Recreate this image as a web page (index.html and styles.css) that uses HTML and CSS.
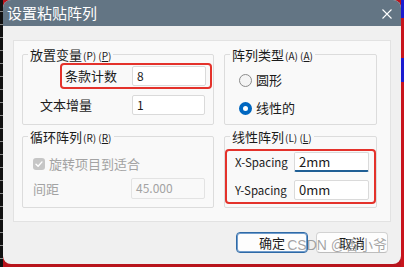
FILE: index.html
```html
<!DOCTYPE html>
<html lang="zh">
<head>
<meta charset="UTF-8">
<title>设置粘贴阵列</title>
<link rel="stylesheet" href="styles.css">
</head>
<body>
<div class="edge-left"></div>

<div class="dialog">
  <div class="titlebar">
    <span class="title">设置粘贴阵列</span>
    <svg class="close" width="10" height="10" viewBox="0 0 10 10">
      <path d="M0.5 0.5 L9.5 9.5 M9.5 0.5 L0.5 9.5" stroke="#fff" stroke-width="1.1" fill="none"/>
    </svg>
  </div>

  <div class="content">
    <div class="panel">

      <div class="group g-place">
        <div class="group-title">放置变量<small>(P) (<u>P</u>)</small></div>
        <div class="row mark row-count">
          <span class="label">条款计数</span>
          <span class="input">8</span>
        </div>
        <div class="row row-step">
          <span class="label">文本增量</span>
          <span class="input">1</span>
        </div>
      </div>

      <div class="group g-type">
        <div class="group-title">阵列类型<small>(A) (<u>A</u>)</small></div>
        <div class="row radio-row first">
          <span class="radio"></span>
          <span class="label">圆形</span>
        </div>
        <div class="row radio-row">
          <span class="radio checked"></span>
          <span class="label">线性的</span>
        </div>
      </div>

      <div class="group g-circ">
        <div class="group-title">循环阵列<small>(R) (<u>R</u>)</small></div>
        <div class="row check-row">
          <span class="checkbox">
            <svg width="12" height="12" viewBox="0 0 12 12"><path d="M3 6.2 L5.1 8.2 L9 3.9" stroke="#fff" stroke-width="1.4" fill="none" stroke-linecap="round" stroke-linejoin="round"/></svg>
          </span>
          <span class="label off">旋转项目到适合</span>
        </div>
        <div class="row row-gap">
          <span class="label off">间距</span>
          <span class="input off">45.000</span>
        </div>
      </div>

      <div class="group g-linear">
        <div class="group-title">线性阵列<small>(L) (<u>L</u>)</small></div>
        <div class="mark spacing">
          <div class="row">
            <span class="label latin">X-Spacing</span>
            <span class="input focus">2mm</span>
          </div>
          <div class="row">
            <span class="label latin">Y-Spacing</span>
            <span class="input">0mm</span>
          </div>
        </div>
      </div>

    </div>

    <div class="footer">
      <button class="btn primary">确定</button>
      <button class="btn">取消</button>
      <span class="watermark">CSDN @香小爷</span>
    </div>
  </div>
</div>

<div class="edge-right">
  <span class="blue b1"></span>
  <span class="red r1"></span>
  <span class="blue b2"></span>
  <span class="red r2"></span>
</div>
</body>
</html>
```

FILE: styles.css
```css
:root {
  --title: #637584;
  --body: #f0f0f0;
  --panel: #f9f9f9;
  --line: #dcdcdc;
  --text: #1b1b1b;
  --muted: #a3a3a3;
  --mark: #e4322b;
  --accent: #0067c0;
}

* { margin: 0; padding: 0; box-sizing: border-box; }

body {
  width: 404px;
  height: 267px;
  background: #b8141c;
  display: flex;
  align-items: flex-start;
  font-family: "Noto Sans CJK SC", "Noto Sans", sans-serif;
  color: var(--text);
  overflow: hidden;
}

/* screen edges around the window */
.edge-left {
  width: 3px;
  height: 267px;
  background: repeating-linear-gradient(180deg, #111 0 11px, #8a8a8a 11px 12px, #111 12px 13px);
}

.edge-right {
  width: 3px;
  height: 267px;
  display: flex;
  flex-direction: column;
}
.edge-right .blue { background: #1b1bd0; }
.edge-right .red { background: #c8141c; }
.b1 { height: 18px; }
.r1 { height: 40px; }
.b2 { height: 24px; }
.r2 { flex: 1; }

/* Window */
.dialog {
  width: 398px;
  height: 264px;
  background: var(--body);
  border-radius: 8px;
  overflow: hidden;
  display: flex;
  flex-direction: column;
}

.titlebar {
  height: 26px;
  background: var(--title);
  display: flex;
  align-items: center;
  justify-content: space-between;
  padding: 0 9px 0 4px;
}

.title {
  color: #fff;
  font-size: 15px;
  line-height: 20px;
}

.close { margin-top: 1px; }

.content {
  padding: 14px 10px 0;
}

.panel {
  background: var(--panel);
  border: 1px solid #e2e2e2;
  height: 182px;
  padding: 6px 13px 0 8px;
  display: grid;
  grid-template-columns: 192px 1fr;
  column-gap: 10px;
  row-gap: 4px;
  align-content: start;
}

/* Group boxes */
.group {
  margin-top: 7px;
  border: 1px solid var(--line);
  border-radius: 2px;
}
.g-place, .g-type { height: 71px; }
.g-circ, .g-linear { height: 72px; }

.group-title {
  margin: -8px 0 0 5px;
  padding: 0 2px;
  width: fit-content;
  background: var(--panel);
  font-size: 13px;
  line-height: 15px;
}
.group-title small {
  font-size: 10px;
  margin-left: 1px;
}

.row {
  display: flex;
  align-items: center;
  height: 20px;
}

.label {
  font-size: 13px;
  line-height: 18px;
  white-space: nowrap;
}
.label.off { color: var(--muted); }
.label.latin {
  font-size: 11.5px;
  flex: 1;
}

.input {
  width: 74px;
  height: 20px;
  background: #fff;
  border: 1px solid #dadada;
  border-radius: 2px;
  font-size: 12px;
  line-height: 18px;
  padding-left: 4px;
  margin-left: auto;
}
.input.off {
  background: var(--panel);
  border-color: #e3e3e3;
  color: var(--muted);
}
.input.focus {
  border-bottom: 2px solid #1f5f95;
}

/* red annotation boxes */
.mark {
  border: 2px solid var(--mark);
  border-radius: 4px;
}

.row-count {
  margin-left: 37px;
  width: 152px;
  height: 26px;
  padding: 0 4px 0 3px;
}

.row-step {
  margin-top: 6px;
  padding: 0 8px 0 17px;
}
.row-step .input { width: 73px; }

/* Radio buttons */
.radio-row {
  padding-left: 14px;
  gap: 4px;
  margin-top: 8px;
}
.radio-row.first { margin-top: 7px; }

.radio {
  width: 13px;
  height: 13px;
  border-radius: 50%;
  border: 1px solid #8b8b8b;
  background: #f4f4f4;
}
.radio.checked {
  border: 4px solid var(--accent);
  background: #fff;
}

/* Checkbox row */
.check-row {
  margin-top: 9px;
  padding-left: 10px;
  gap: 4px;
}
.checkbox {
  width: 12px;
  height: 12px;
  border-radius: 3px;
  background: #c6c6c6;
  display: flex;
}

.row-gap {
  margin-top: 4px;
  height: 21px;
  padding: 0 8px 0 10px;
}
.row-gap .input { height: 21px; }

/* Linear spacing box */
.spacing {
  margin: 4px 0 0;
  height: 55px;
  padding: 1px 5px 2px 8px;
  display: flex;
  flex-direction: column;
  gap: 8px;
}
.spacing .input {
  width: 75px;
  font-size: 13px;
}

/* Footer buttons */
.footer {
  position: relative;
  display: flex;
  justify-content: flex-end;
  gap: 8px;
  margin-top: 10px;
  padding-right: 3px;
}

.btn {
  width: 72px;
  height: 21px;
  background: #fdfdfd;
  border: 1px solid #d2d2d2;
  border-bottom-color: #bdbdbd;
  border-radius: 4px;
  font-family: "Noto Sans CJK SC", sans-serif;
  font-size: 13px;
  color: var(--text);
}
.btn.primary {
  border: 1px solid #2f6aa6;
  box-shadow: inset 0 0 0 1px #6f9ccc;
}

.watermark {
  position: absolute;
  right: 4px;
  top: 2px;
  font-family: "Liberation Sans", "Noto Sans CJK SC", sans-serif;
  font-size: 14px;
  line-height: 22px;
  color: rgba(125, 125, 125, 0.7);
  pointer-events: none;
}
```
